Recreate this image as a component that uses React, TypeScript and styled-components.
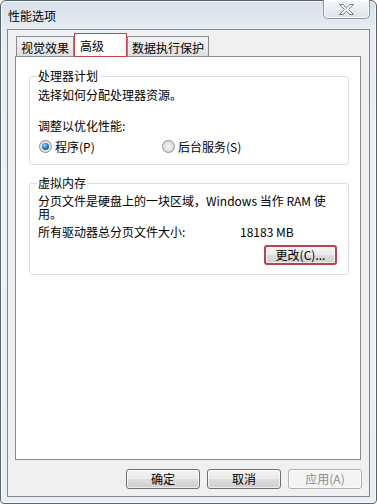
import React from "react";
import styled, { createGlobalStyle } from "styled-components";

const GlobalStyle = createGlobalStyle`
  html, body {
    margin: 0;
    padding: 0;
    background: #ffffff;
  }
  body {
    font-family: "Noto Sans CJK SC", "DejaVu Sans", sans-serif;
    font-size: 12px;
    color: #000;
  }
`;

const Window = styled.div`
  box-sizing: border-box;
  width: 377px;
  height: 504px;
  display: flex;
  flex-direction: column;
  padding: 0 6px 6px 6px;
  border: 1px solid #59636e;
  border-radius: 6px 6px 4px 4px;
  background: linear-gradient(180deg, #d9e1e9 0%, #e7edf3 6%, #edf1f5 40%, #e9eef3 100%);
  box-shadow: inset 0 0 0 1px rgba(255, 255, 255, 0.7);
`;

const TitleBar = styled.div`
  height: 28px;
  flex: none;
  display: flex;
  justify-content: space-between;
  align-items: flex-start;
`;

const Title = styled.div`
  margin: 8px 0 0 1px;
  line-height: 14px;
  color: #000;
`;

const CloseButton = styled.div`
  box-sizing: border-box;
  width: 47px;
  height: 19px;
  margin-top: -1px;
  display: flex;
  align-items: center;
  justify-content: center;
  border: 1px solid #8a96a4;
  border-top: none;
  border-radius: 0 0 5px 5px;
  background: linear-gradient(180deg, #f6f8fa 0%, #e9edf2 50%, #dde3ea 100%);
  box-shadow: inset 0 0 0 1px rgba(255, 255, 255, 0.8);
`;

const Client = styled.div`
  flex: 1;
  display: flex;
  flex-direction: column;
  border: 1px solid #7d8691;
  background: #f0f0f0;
`;

const TabStrip = styled.div`
  height: 26px;
  flex: none;
  display: flex;
  align-items: flex-end;
  padding-left: 8px;
`;

const Tab = styled.div<{ $selected?: boolean }>`
  box-sizing: border-box;
  display: flex;
  align-items: center;
  line-height: 12px;
  white-space: nowrap;
  border: 1px solid #898c95;
  border-bottom: none;
  ${(p) =>
    p.$selected
      ? `
    position: relative;
    z-index: 1;
    height: 24px;
    min-width: 53px;
    margin-bottom: -1px;
    padding: 2px 4px 0 5px;
    background: #ffffff;
    border: 1px solid #c8414c;
  `
      : `
    height: 20px;
    padding: 2px 4px 0 4px;
    background: linear-gradient(180deg, #f4f4f4 0%, #ebebeb 50%, #dedede 100%);
  `}
`;

const Panel = styled.div`
  flex: 1;
  margin: 0 8px 0 7px;
  border: 1px solid #898c95;
  background: #ffffff;
  padding: 13px 11px 0 13px;
  display: flex;
  flex-direction: column;
  gap: 12px;
`;

const Group = styled.fieldset<{ $top: number; $bottom: number }>`
  margin: 0;
  padding: ${(p) => p.$top}px 11px ${(p) => p.$bottom}px 8px;
  border: 1px solid #d5dfe5;
  border-radius: 3px;
  min-width: 0;
`;

const Legend = styled.legend`
  padding: 0 1px;
  margin-left: -1px;
  line-height: 12px;
`;

const Line = styled.div<{ $gap?: number }>`
  line-height: 13px;
  margin-top: ${(p) => p.$gap ?? 0}px;
  white-space: nowrap;
`;

const Para = styled.p`
  margin: 0;
  width: 292px;
  line-height: 13px;
`;

const RadioRow = styled.div`
  display: flex;
  margin-top: 8px;
  height: 13px;
`;

const Option = styled.label<{ $width?: number }>`
  display: flex;
  align-items: center;
  gap: 3px;
  line-height: 12px;
  ${(p) => (p.$width ? `width: ${p.$width}px;` : "")}
`;

const RadioMark = styled.span<{ $checked?: boolean }>`
  box-sizing: border-box;
  width: 13px;
  height: 13px;
  margin-left: 1px;
  border-radius: 50%;
  border: 1px solid #8e8f8f;
  background: radial-gradient(circle at 50% 50%, #f4f4f4 0%, #e2e2e2 55%, #cfcfcf 100%);
  display: flex;
  align-items: center;
  justify-content: center;
  flex: none;
  &::after {
    content: "";
    width: 7px;
    height: 7px;
    border-radius: 50%;
    display: ${(p) => (p.$checked ? "block" : "none")};
    background: radial-gradient(circle at 40% 35%, #9fdcfa 0%, #2b7fbf 45%, #0d3f6a 100%);
  }
`;

const SizeRow = styled.div`
  display: flex;
  line-height: 12px;
  margin-top: 6px;
`;

const SizeLabel = styled.span`
  width: 202px;
`;

const ButtonRight = styled.div`
  display: flex;
  justify-content: flex-end;
  margin-top: 7px;
`;

const Button = styled.div<{ $disabled?: boolean; $marked?: boolean; $width?: number }>`
  box-sizing: border-box;
  width: ${(p) => p.$width ?? 74}px;
  height: 20px;
  display: flex;
  align-items: center;
  justify-content: center;
  line-height: 12px;
  border-radius: 3px;
  border: ${(p) => (p.$marked ? "2px solid #b8424f" : p.$disabled ? "1px solid #adb2b5" : "1px solid #707070")};
  background: ${(p) =>
    p.$disabled
      ? "#f4f4f4"
      : "linear-gradient(180deg, #f2f2f2 0%, #ebebeb 50%, #dddddd 51%, #cfcfcf 100%)"};
  color: ${(p) => (p.$disabled ? "#8d8d8d" : "#000")};
  box-shadow: inset 0 0 0 1px rgba(255, 255, 255, 0.6);
`;

const ButtonBar = styled.div`
  flex: none;
  display: flex;
  justify-content: flex-end;
  gap: 7px;
  padding: 9px 7px 7px 0;
`;

const CloseGlyph: React.FC = () => (
  <svg width="15" height="11" viewBox="0 0 15 11">
    <polygon
      points="0.5,0.5 4,0.5 7.5,3.8 11,0.5 14.5,0.5 9.6,5.5 14.5,10.5 11,10.5 7.5,7.2 4,10.5 0.5,10.5 5.4,5.5"
      fill="#f6f6f6"
      stroke="#7a7a7a"
      strokeWidth="1"
      strokeLinejoin="round"
    />
  </svg>
);

const App: React.FC = () => {
  return (
    <>
      <GlobalStyle />
      <Window>
        <TitleBar>
          <Title>性能选项</Title>
          <CloseButton>
            <CloseGlyph />
          </CloseButton>
        </TitleBar>
        <Client>
          <TabStrip>
            <Tab>视觉效果</Tab>
            <Tab $selected>高级</Tab>
            <Tab>数据执行保护</Tab>
          </TabStrip>
          <Panel>
            <Group $top={6} $bottom={11}>
              <Legend>处理器计划</Legend>
              <Line>选择如何分配处理器资源。</Line>
              <Line $gap={18}>调整以优化性能:</Line>
              <RadioRow>
                <Option $width={123}>
                  <RadioMark $checked />
                  <span>程序(P)</span>
                </Option>
                <Option>
                  <RadioMark />
                  <span>后台服务(S)</span>
                </Option>
              </RadioRow>
            </Group>
            <Group $top={5} $bottom={9}>
              <Legend>虚拟内存</Legend>
              <Para>分页文件是硬盘上的一块区域，Windows 当作 RAM 使用。</Para>
              <SizeRow>
                <SizeLabel>所有驱动器总分页文件大小:</SizeLabel>
                <span>18183 MB</span>
              </SizeRow>
              <ButtonRight>
                <Button $marked $width={73}>
                  更改(C)...
                </Button>
              </ButtonRight>
            </Group>
          </Panel>
          <ButtonBar>
            <Button>确定</Button>
            <Button>取消</Button>
            <Button $disabled>应用(A)</Button>
          </ButtonBar>
        </Client>
      </Window>
    </>
  );
};

export default App;
